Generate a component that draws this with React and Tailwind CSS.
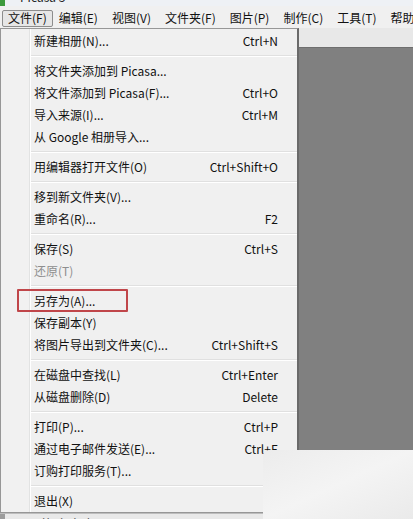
import React from "react";

const font = { fontFamily: '"Noto Sans CJK SC", "Microsoft YaHei", "Noto Sans", sans-serif' };

const groups = [
  [["新建相册(N)...", "Ctrl+N"]],
  [
    ["将文件夹添加到 Picasa...", ""],
    ["将文件添加到 Picasa(F)...", "Ctrl+O"],
    ["导入来源(I)...", "Ctrl+M"],
    ["从 Google 相册导入...", ""],
  ],
  [["用编辑器打开文件(O)", "Ctrl+Shift+O"]],
  [
    ["移到新文件夹(V)...", ""],
    ["重命名(R)...", "F2"],
  ],
  [
    ["保存(S)", "Ctrl+S"],
    ["还原(T)", "", true],
  ],
  [
    ["另存为(A)...", ""],
    ["保存副本(Y)", ""],
    ["将图片导出到文件夹(C)...", "Ctrl+Shift+S"],
  ],
  [
    ["在磁盘中查找(L)", "Ctrl+Enter"],
    ["从磁盘删除(D)", "Delete"],
  ],
  [
    ["打印(P)...", "Ctrl+P"],
    ["通过电子邮件发送(E)...", "Ctrl+E"],
    ["订购打印服务(T)...", ""],
  ],
  [["退出(X)", ""]],
];

const menus = ["编辑(E)", "视图(V)", "文件夹(F)", "图片(P)", "制作(C)", "工具(T)", "帮助(H)"];

export default function App() {
  return (
    <div className="relative w-[413px] h-[519px] overflow-hidden bg-[#f0f0f0] text-[12px] text-[#111]" style={font}>
      {/* title bar strip */}
      <div className="h-[6px] overflow-hidden flex bg-[#eef1f5]">
        <div className="w-[5px] h-[6px] bg-[#3c9a3c]" />
        <div className="ml-[15px] -mt-[11px] text-[12px] leading-[16px] text-[#222]">Picasa 3</div>
      </div>
      {/* menubar */}
      <div className="h-[22px] flex items-center bg-[#f0f0f0] pl-[2px] whitespace-nowrap">
        <div className="h-[17px] mt-[2px] flex items-center px-[5px] border border-[#8d8d8d] rounded-[2px] bg-[#e6e6e6]">
          文件(F)
        </div>
        <div className="flex">
          {menus.map((m) => (
            <div key={m} className="px-[7px] mt-[2px] first:pl-[6px]">
              {m}
            </div>
          ))}
        </div>
      </div>
      {/* main area */}
      <div className="flex h-[491px]">
        <div className="w-[299px] flex flex-col shrink-0">
          <div className="flex bg-[#f0f0f0] border-l border-t border-b border-[#979797] border-r-2 border-r-[#6a6a6a]">
            <div className="w-[29px] bg-[#f1f1f1] border-r border-[#e2e3e3]" />
            <div className="w-[1px] bg-white" />
            <div className="flex-1 pt-[1px]">
              {groups.map((g, gi) => (
                <div key={gi}>
                  {gi > 0 && (
                    <div className="h-[8px] flex flex-col justify-center">
                      <div className="h-[1px] bg-[#e0e0e0]" />
                      <div className="h-[1px] bg-white" />
                    </div>
                  )}
                  {g.map(([label, sc, dis]) => (
                    <div
                      key={label}
                      className={`h-[22px] flex items-center justify-between pl-[3px] pr-[19px] whitespace-nowrap ${dis ? "text-[#8e8e8e]" : ""}`}
                    >
                      <span>{label}</span>
                      <span>{sc}</span>
                    </div>
                  ))}
                </div>
              ))}
            </div>
          </div>
          <div className="flex-1 flex flex-col bg-[#e9e9e9] border-t border-[#bdbdbd]">
            <div className="h-[5px] overflow-hidden flex">
              <div className="w-[5px] bg-[#9c9c9c]" />
              <div className="ml-[28px] mt-[1px] text-[12px] leading-[16px] tracking-[1px] text-[#333]">IIllIIlIIlIIlII</div>
            </div>
          </div>
        </div>
        <div className="flex-1 flex flex-col">
          <div className="h-[19px] bg-[#e8e8e8]" />
          <div className="h-[1px] bg-[#6e6e6e]" />
          <div className="flex-1 bg-[#808080]" />
        </div>
      </div>
      {/* highlight box */}
      <div className="absolute left-[17px] top-[289px] w-[111px] h-[23px] border-2 border-[#c0464a] rounded-[1px]" />
      {/* watermark blur */}
      <div className="absolute left-[263px] top-[450px] right-0 bottom-0 bg-gradient-to-br from-[#ececec] via-[#f4f4f4] to-[#eaeaea] rounded-tl-[6px]" />
    </div>
  );
}
